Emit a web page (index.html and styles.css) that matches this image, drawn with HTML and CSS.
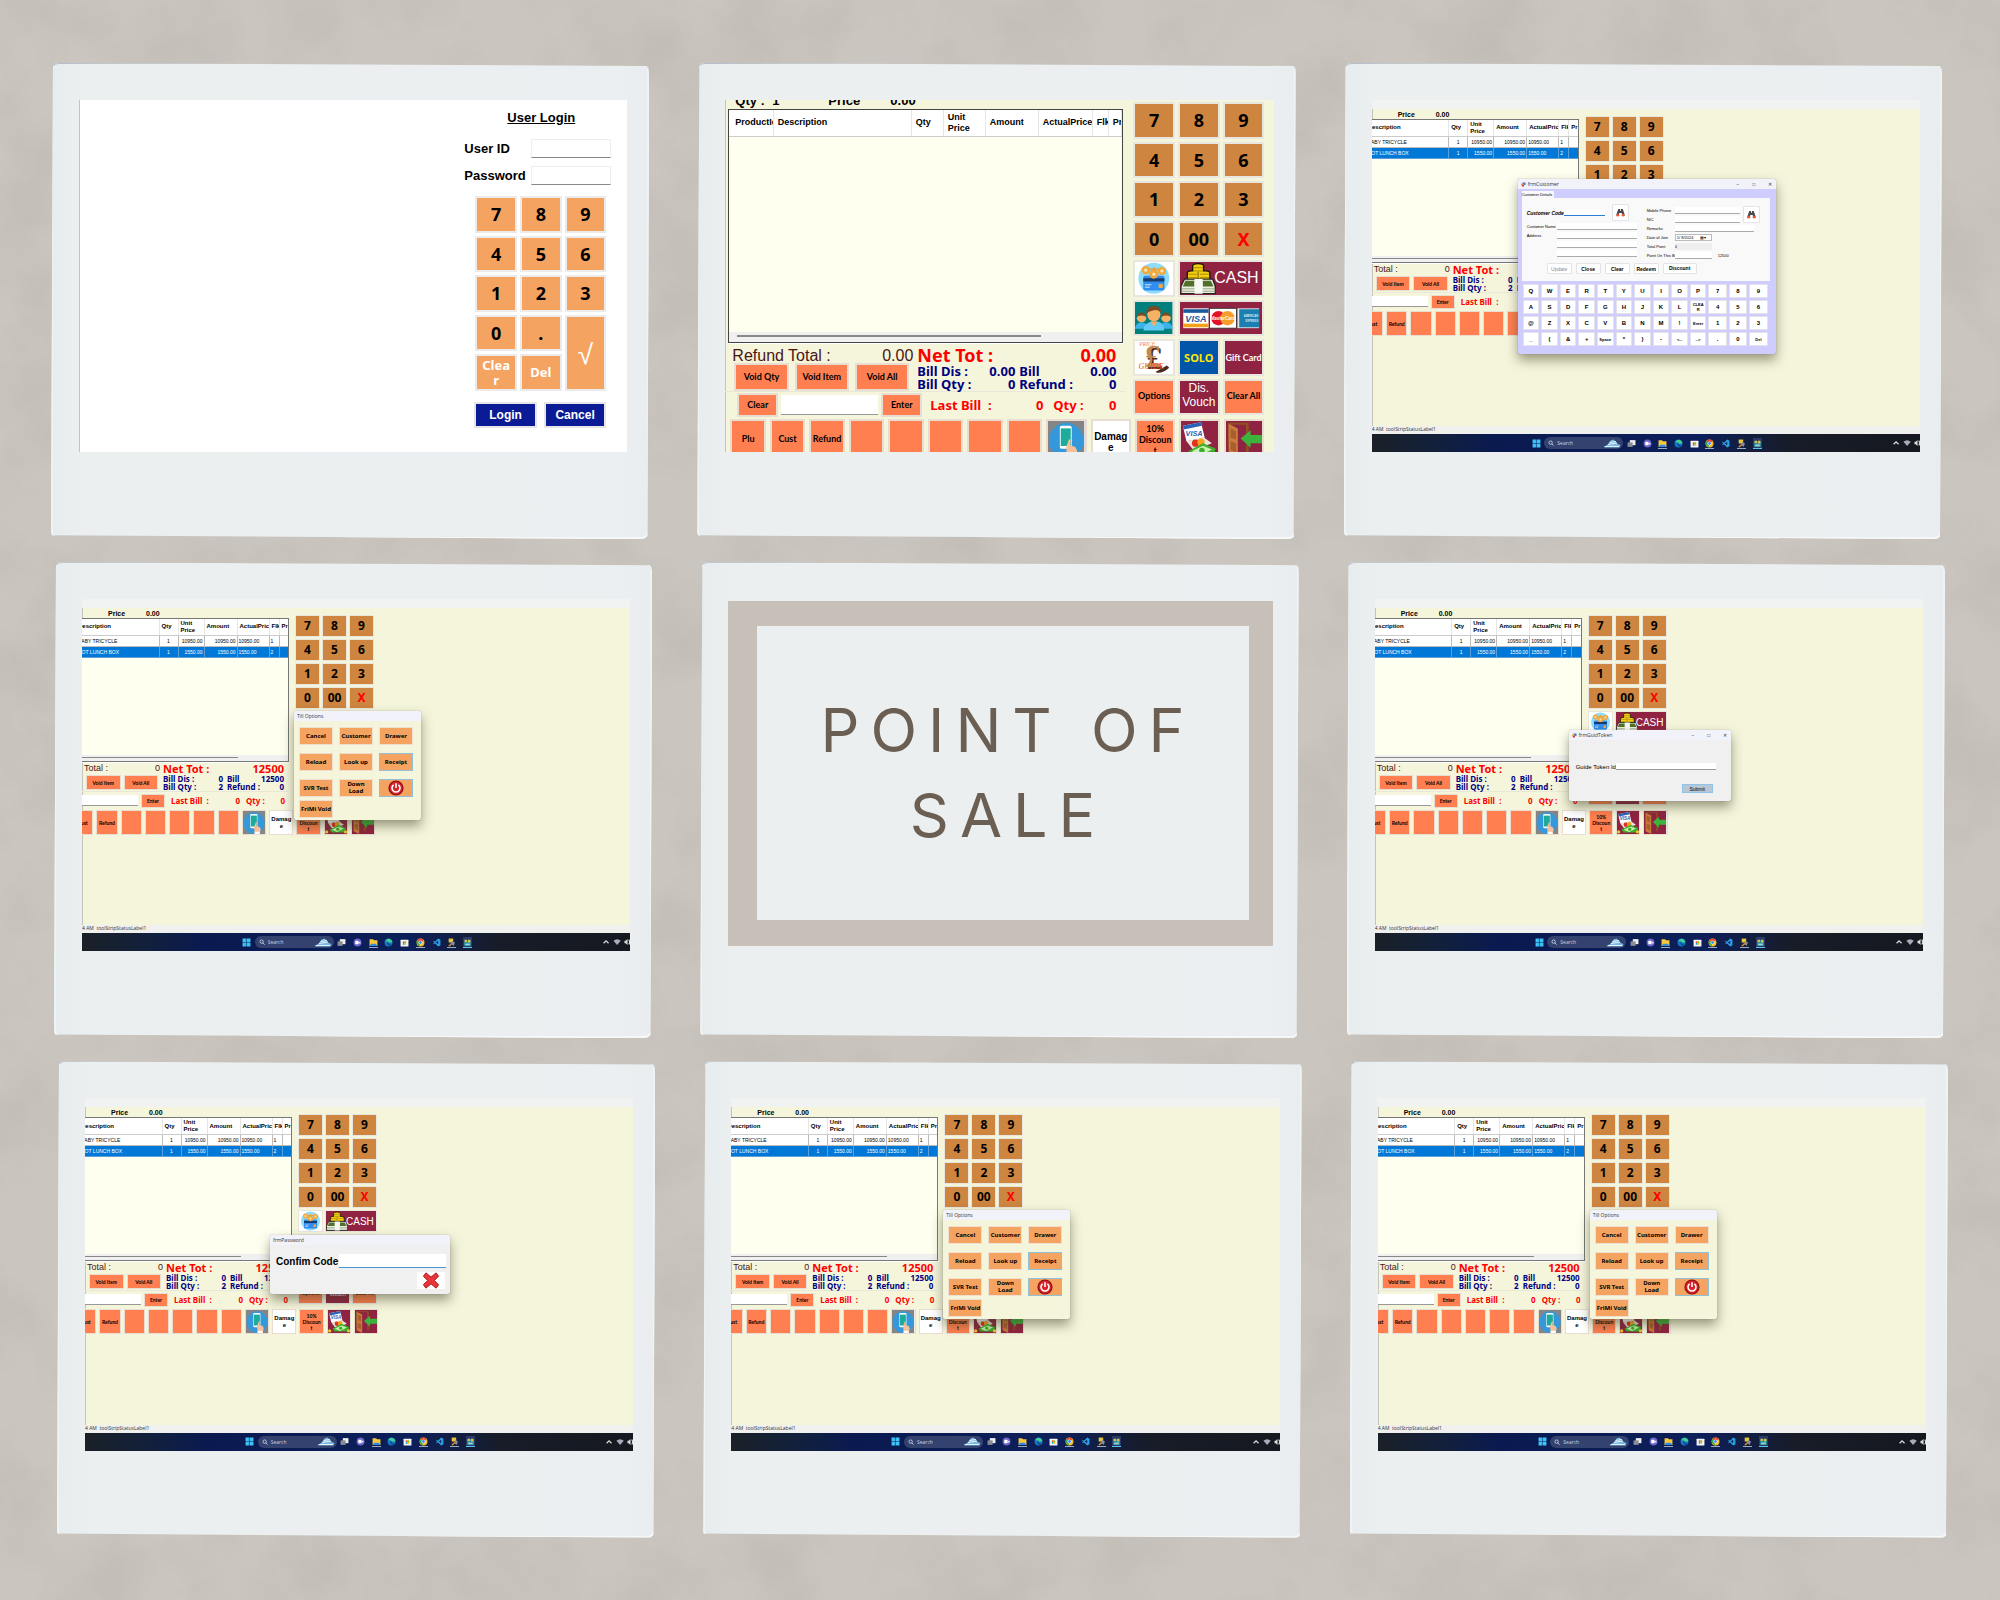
FILE: index.html
```html
<!DOCTYPE html>
<html lang="en">
<head>
<meta charset="utf-8">
<title>Point of Sale</title>
<link rel="stylesheet" href="styles.css">
</head>
<body>
<svg class="paper" aria-hidden="true">
  <filter id="mottle" x="0" y="0" width="100%" height="100%">
    <feTurbulence type="fractalNoise" baseFrequency=".011" numOctaves="6" seed="7"/>
    <feColorMatrix values="0 0 0 0 .44  0 0 0 0 .41  0 0 0 0 .37  .7 0 0 0 -.28"/>
  </filter>
  <rect width="100%" height="100%" filter="url(#mottle)"/>
</svg>

<svg class="sprite" aria-hidden="true">
  <symbol id="i-card" viewBox="0 0 40 40"><rect width="40" height="40" fill="#fff"/><circle cx="20" cy="20" r="19" fill="#8fdcf8"/><path d="M10 9h20M20 6v10" stroke="#e8a13a" stroke-width="2"/><circle cx="10" cy="10" r="5" fill="#f3a83b"/><circle cx="30" cy="11" r="5" fill="#f3a83b"/><circle cx="10" cy="10" r="2" fill="#fde7ae"/><circle cx="30" cy="11" r="2" fill="#fde7ae"/><rect x="7" y="17" width="26" height="18" rx="2" fill="#2f8cf0"/><rect x="7" y="20" width="26" height="4" fill="#173b6c"/><circle cx="20" cy="15" r="5.500" fill="#f3a83b"/><circle cx="20" cy="15" r="2" fill="#fde7ae"/><rect x="26" y="27" width="5" height="5" fill="#f3a83b"/><path d="M9 28h8M9 31h6" stroke="#fff"/></symbol>
  <symbol id="i-cash" viewBox="0 0 40 40" preserveAspectRatio="none"><g fill="#f2cf12" stroke="#1a1600" stroke-width="1.500"><path d="M8 22V14q0-3 4-3h2V5q0-3 6-3t6 3v6h3q4 0 4 3v8z"/></g><path d="M9 15h10M22 15h10M9 19h10M22 19h10M15 7h10M15 11h10" stroke="#a47f00"/><path d="M20 12v10" stroke="#6b5200"/><path d="M5 21h31l3 9v9H1v-9z" fill="#e9efdc" stroke="#222" stroke-width="1.500"/><path d="M6 23h10v7H3zM25 23h9l3 7H25z" fill="#52702b"/><path d="M2 33h37M2 36h37" stroke="#8d9a80"/><path d="M16 21h9v18h-9z" fill="#f6f8f2"/></symbol>
  <symbol id="i-people" viewBox="0 0 40 40" preserveAspectRatio="none"><rect width="40" height="40" fill="#00807d"/><circle cx="7" cy="20" r="5" fill="#f5b266"/><path d="M2 18q1-5 5-5t5 5q-5-3-10 0z" fill="#7b4a22"/><circle cx="33" cy="20" r="5" fill="#f5b266"/><path d="M28 18q1-5 5-5t5 5q-5-3-10 0z" fill="#7b4a22"/><path d="M0 33q1-8 7-8t7 8zM26 33q1-8 7-8t7 8z" fill="#3bb3ea"/><ellipse cx="20" cy="15" rx="7" ry="9" fill="#f5b266"/><path d="M12 14Q12 5 20 5t8 9q-3-5-8-4t-8 4z" fill="#7b4a22"/><path d="M9 35q0-10 11-11t11 11z" fill="#62c8f5"/><path d="M16 24l4 6 4-6z" fill="#f5b266"/></symbol>
  <symbol id="i-cards" viewBox="0 0 84 36"><rect width="84" height="36" fill="#902341"/><rect y="7" width="28" height="22" fill="#fff"/><rect y="8" width="28" height="4" fill="#1a5a9c"/><rect y="24" width="28" height="4" fill="#f4a11c"/><text x="14" y="22" text-anchor="middle" font-family="Liberation Sans" font-size="10" font-weight="bold" font-style="italic" fill="#1a5a9c">VISA</text><rect x="29" y="7" width="30" height="22" fill="#fff" stroke="#333"/><circle cx="39" cy="18" r="8" fill="#e2142b"/><circle cx="49" cy="18" r="8" fill="#f79e2a"/><text x="44" y="20" text-anchor="middle" font-family="Liberation Sans" font-size="5" font-weight="bold" font-style="italic" fill="#fff">MasterCard</text><rect x="60" y="7" width="24" height="22" fill="#dfe5ea"/><rect x="62" y="8" width="22" height="20" fill="#1d7fb0"/><text x="83" y="17" text-anchor="end" font-family="Liberation Sans" font-size="3" font-weight="bold" fill="#d7ecf6">AMERICAN</text><text x="83" y="22" text-anchor="end" font-family="Liberation Sans" font-size="3" font-weight="bold" fill="#d7ecf6">EXPRESS</text></symbol>
  <symbol id="i-pound" viewBox="0 0 40 40"><rect width="40" height="40" fill="#fff"/><path d="M22 38l14-8 3 3q-8 7-15 6z" fill="#4a2a18"/><text x="11" y="34" font-family="Liberation Serif" font-size="40" font-weight="bold" fill="#4a2a18">£</text><text x="9" y="32" font-family="Liberation Serif" font-size="40" font-weight="bold" fill="#c08a55">£</text><text x="2" y="6" font-family="Liberation Serif" font-size="7" font-style="italic" fill="#ff7f50">PRICE</text><text x="1" y="35" font-family="Liberation Serif" font-size="10" font-style="italic" fill="#f0562c">GUIDE</text></symbol>
  <symbol id="i-phone" viewBox="0 0 40 40" preserveAspectRatio="none"><rect width="40" height="40" fill="#858585"/><circle cx="20" cy="21" r="19" fill="#3498db"/><rect x="13" y="5" width="13" height="25" rx="2" fill="#fff"/><rect x="14" y="8" width="11" height="19" fill="#1dab9b"/><path d="M20 28l3-8q2-1 2 2l-1 4 6 2 2 4-2 8h-9z" fill="#f9bf96"/><path d="M21 36h9v4h-9z" fill="#fff"/></symbol>
  <symbol id="i-pay" viewBox="0 0 40 40"><path d="M2 5l20-4 4 17-20 4z" fill="#fff"/><path d="M2 5l20-4 1 4-20 4z" fill="#2b62b4"/><text x="5" y="16" font-family="Liberation Sans" font-size="8" font-weight="bold" font-style="italic" fill="#2b62b4">VISA</text><path d="M6 22l18-5 10 7-20 8z" fill="#e9e4dc"/><circle cx="16" cy="24" r="4" fill="#e5301f"/><circle cx="22" cy="23" r="4" fill="#f6a21c"/><path d="M8 33l16-9 14 6-2 8H12z" fill="#3fae2a"/><path d="M12 33l12-6 10 4-12 6z" fill="#c9f3b2"/><circle cx="23" cy="32" r="3" fill="#3fae2a"/><circle cx="3" cy="37" r="3" fill="#eec22a"/><circle cx="37" cy="37" r="3" fill="#eec22a"/></symbol>
  <symbol id="i-exit" viewBox="0 0 40 40" preserveAspectRatio="none"><rect width="40" height="40" fill="#902341"/><path d="M2 37V2h23v33h-3V4H5z" fill="#8f5022"/><path d="M3 3l10 5v32L3 35z" fill="#c97a3c"/><path d="M5 8l6 3v9l-6-2zM5 22l6 2v10l-6-3z" fill="#a85f2b"/><path d="M16 19l11-9v5h13v9H27v5z" fill="#3cb43c"/></symbol>
  <symbol id="i-power" viewBox="0 0 20 20"><circle cx="10" cy="10" r="9.500" fill="#8e0f12"/><circle cx="10" cy="10" r="8" fill="#d8222a"/><path d="M7 6a5 5 0 1 0 6 0M10 4v6" fill="none" stroke="#fff" stroke-width="2"/></symbol>
  <symbol id="i-cross" viewBox="0 0 20 20"><path d="M1 5l3-4 6 5 6-5 3 4-5 5 5 5-3 4-6-5-6 5-3-4 5-5z" fill="#e8353a" stroke="#a11" stroke-width="1"/></symbol>
  <symbol id="i-find" viewBox="0 0 20 20"><path d="M5 2h4v4h2V2h4l4 12v3h-6v-6H7v6H1v-3z" fill="#4a4a4e"/><circle cx="4" cy="16" r="3" fill="#f0562c"/><circle cx="16" cy="16" r="3" fill="#f0562c"/></symbol>
  <symbol id="i-app" viewBox="0 0 10 10"><rect x="3" y="1" width="6" height="5" fill="#4478c8"/><rect y="3" width="5" height="4" fill="#f0a13a"/><rect x="2" y="6" width="4" height="3" fill="#d13b3b"/></symbol>
  <symbol id="t-win" viewBox="0 0 16 16"><path d="M1 1h6v6H1zM8 1h7v6H8zM1 8h6v7H1zM8 8h7v7H8z" fill="#3dc3f7"/></symbol>
  <symbol id="t-lens" viewBox="0 0 16 16"><circle cx="7" cy="7" r="4.500" fill="none" stroke="#dfe6f5" stroke-width="2"/><path d="M10 10l5 5" stroke="#dfe6f5" stroke-width="2"/></symbol>
  <symbol id="t-shoe" viewBox="0 0 36 18"><path d="M1 15q8-1 14-12l6-2 4 4q3 5 10 7l-2 5H3z" fill="#79b8e0"/><path d="M10 11l18-3M13 7l13-2M4 15h28" stroke="#e5f4fc" stroke-width="2"/></symbol>
  <symbol id="t-task" viewBox="0 0 16 16"><rect x="5" y="2" width="10" height="9" fill="#eee"/><rect x="1" y="6" width="9" height="8" fill="#8a8d94"/></symbol>
  <symbol id="t-chat" viewBox="0 0 16 16"><circle cx="8" cy="8" r="7" fill="#6b63c9"/><rect x="4" y="5" width="6" height="6" rx="1" fill="#fff"/><path d="M10 8l3-2v5z" fill="#fff"/></symbol>
  <symbol id="t-folder" viewBox="0 0 16 16"><path d="M1 2h6l2 2h6v10H1z" fill="#f9c83a"/><path d="M1 14l3-4h8l3 4z" fill="#2f8be0"/></symbol>
  <symbol id="t-edge" viewBox="0 0 16 16"><circle cx="8" cy="8" r="7" fill="#1377c8"/><path d="M2 6q3-6 9-4 4 2 4 6h-7q0-3-6-2z" fill="#43d18e"/><path d="M7 8q0 5 6 5" stroke="#0b3f7d" stroke-width="2" fill="none"/></symbol>
  <symbol id="t-store" viewBox="0 0 16 16"><rect x="1" y="3" width="14" height="12" rx="1" fill="#f2f4f7"/><path d="M5 6h3v3H5z" fill="#f25022"/><path d="M8 6h3v3H8z" fill="#7fba00"/><path d="M5 9h3v3H5z" fill="#00a4ef"/><path d="M8 9h3v3H8z" fill="#ffb900"/></symbol>
  <symbol id="t-chrome" viewBox="0 0 16 16"><circle cx="8" cy="8" r="7" fill="#fbc116"/><path d="M8 8L2 4q6-6 12 0z" fill="#ea4335"/><path d="M8 8L2 4q-3 6 4 11z" fill="#34a853"/><circle cx="8" cy="8" r="3.500" fill="#fff"/><circle cx="8" cy="8" r="2.500" fill="#4285f4"/></symbol>
  <symbol id="t-code" viewBox="0 0 16 16"><path d="M11 1l4 2v10l-4 2-9-9 1-1 8 6V5l-8 6-1-1z" fill="#2aa0e8"/></symbol>
  <symbol id="t-db" viewBox="0 0 16 16"><path d="M3 1h8v7H3z" fill="#e8c63a"/><path d="M2 14l6-6 2 2-5 5z" fill="#c9863a"/><path d="M9 5l5 3-2 6-3-3z" fill="#8a9099"/></symbol>
  <symbol id="t-till" viewBox="0 0 16 16"><path d="M2 4h12v10H2z" fill="#2a8f9d"/><path d="M3 3h4v4H3zM9 3h4v5H9z" fill="#e2c04a"/><path d="M4 10h8v3H4z" fill="#9bd6de"/></symbol>
  <symbol id="t-tray" viewBox="0 0 44 16"><path d="M1 10l4-4 4 4" fill="none" stroke="#ddd" stroke-width="2"/><path d="M17 6q6-5 12 0l-6 7z" fill="#aab"/><path d="M35 6h2l3-3v10l-3-3h-2z" fill="#ddd"/><path d="M42 4q3 4 0 8" fill="none" stroke="#ddd" stroke-width="2"/></symbol>
</svg>

<template id="keypad">
  <div class="keys">
    <button class="num">7</button><button class="num">8</button><button class="num">9</button>
    <button class="num">4</button><button class="num">5</button><button class="num">6</button>
    <button class="num">1</button><button class="num">2</button><button class="num">3</button>
    <button class="num">0</button><button class="num">00</button><button class="num red">X</button>
    <button class="pic pale" aria-label="Card points"><svg><use href="#i-card"/></svg></button>
    <button class="cash"><svg aria-hidden="true"><use href="#i-cash"/></svg>CASH</button>
    <button class="pic" aria-label="Customers"><svg><use href="#i-people"/></svg></button>
    <button class="pic wide" aria-label="Credit cards"><svg><use href="#i-cards"/></svg></button>
    <button class="pic pale" aria-label="Price guide"><svg><use href="#i-pound"/></svg></button>
    <button class="solo">SOLO</button><button class="gift">Gift Card</button>
    <button class="act">Options</button><button class="vouch">Dis. Vouch</button><button class="act">Clear All</button>
  </div>
</template>

<template id="strip-end">
  <button class="pic phone" aria-label="Mobile top-up"><svg><use href="#i-phone"/></svg></button>
  <button class="damage">Damag<br>e</button>
  <button class="act ten">10%<br>Discoun<br>t</button>
  <button class="pic wine" aria-label="Payments"><svg><use href="#i-pay"/></svg></button>
  <button class="pic" aria-label="Exit"><svg><use href="#i-exit"/></svg></button>
</template>

<template id="desktop">
  <div class="window-top"></div>
  <div class="pos">
    <div class="bill">
      <div class="info"><span class="i-price">Price</span><span>0.00</span></div>
      <div class="list">
        <table>
          <colgroup><col class="c-desc"><col class="c-qty"><col class="c-unit"><col class="c-amt"><col class="c-act"><col class="c-flag"><col></colgroup>
          <thead><tr><th>Description</th><th>Qty</th><th>Unit<br>Price</th><th>Amount</th><th>ActualPrice</th><th>Flk</th><th>Pr</th></tr></thead>
          <tbody>
            <tr><td>BABY TRICYCLE</td><td class="mid">1</td><td class="end">10950.00</td><td class="end">10950.00</td><td>10950.00</td><td>1</td><td></td></tr>
            <tr class="picked"><td>HOT LUNCH BOX</td><td class="mid">1</td><td class="end">1550.00</td><td class="end">1550.00</td><td>1550.00</td><td>2</td><td></td></tr>
          </tbody>
        </table>
        <div class="scroll"><i></i></div>
      </div>
      <div class="totals">
        <div class="side">
          <p class="total"><span>Total :</span><span>0</span></p>
          <div class="voids"><button class="act">Void Item</button><button class="act">Void All</button></div>
        </div>
        <div class="sums">
          <p class="net"><span>Net Tot :</span><span>12500</span></p>
          <p class="pairs"><span class="pair"><span>Bill Dis :</span><span>0</span></span><span class="pair"><span>Bill</span><span>12500</span></span></p>
          <p class="pairs"><span class="pair"><span>Bill Qty :</span><span>2</span></span><span class="pair"><span>Refund :</span><span>0</span></span></p>
        </div>
      </div>
      <div class="entry"><input type="text" aria-label="Item code"><button class="act">Enter</button><p class="pairs last"><span class="pair"><span>Last Bill&nbsp; :</span><span>0</span></span><span class="pair"><span>Qty :</span><span>0</span></span></p></div>
    </div>
    <div class="pad"></div>
  </div>
  <div class="strip"><button class="act">Cust</button><button class="act">Refund</button><button class="act" aria-label="Spare 1"></button><button class="act" aria-label="Spare 2"></button><button class="act" aria-label="Spare 3"></button><button class="act" aria-label="Spare 4"></button><button class="act" aria-label="Spare 5"></button></div>
  <div class="status">4 AM&nbsp; toolStripStatusLabel1</div>
  <div class="taskbar">
    <div class="apps">
      <svg><use href="#t-win"/></svg>
      <span class="search"><svg><use href="#t-lens"/></svg>Search<svg class="shoe"><use href="#t-shoe"/></svg></span>
      <svg><use href="#t-task"/></svg><svg><use href="#t-chat"/></svg><svg class="open"><use href="#t-folder"/></svg><svg><use href="#t-edge"/></svg><svg><use href="#t-store"/></svg><svg class="open"><use href="#t-chrome"/></svg><svg><use href="#t-code"/></svg><svg class="open"><use href="#t-db"/></svg><svg class="open now"><use href="#t-till"/></svg>
    </div>
    <svg class="tray"><use href="#t-tray"/></svg>
  </div>
</template>

<template id="dlg-till">
  <section class="dialog till">
    <header>Till Options</header>
    <div class="options">
      <button>Cancel</button><button>Customer</button><button>Drawer</button>
      <button>Reload</button><button>Look up</button><button class="focus">Receipt</button>
      <button>SVR Test</button><button>Down<br>Load</button><button class="focus" aria-label="Power off"><svg><use href="#i-power"/></svg></button>
    </div>
    <div class="options more"><button>FriMi Void</button></div>
  </section>
</template>

<template id="dlg-token">
  <section class="dialog token">
    <header><svg><use href="#i-app"/></svg>frmGuidToken<span class="ctl"><i>–</i><i>□</i><i>✕</i></span></header>
    <label>Guide Token Id <input type="text"></label>
    <button>Submit</button>
  </section>
</template>

<template id="dlg-password">
  <section class="dialog password">
    <header>frmPassword</header>
    <label>Confim Code <input type="text"></label>
    <button aria-label="Close"><svg><use href="#i-cross"/></svg></button>
  </section>
</template>

<template id="dlg-customer">
  <section class="dialog customer">
    <header><svg><use href="#i-app"/></svg>frmCustomer<span class="ctl"><i>–</i><i>□</i><i>✕</i></span></header>
    <div class="tab">Customer Details</div>
    <div class="sheet">
      <div class="fields">
        <div class="col-a">
          <div class="code-row"><label>Customer Code <input type="text"></label><button aria-label="Find by code"><svg><use href="#i-find"/></svg></button></div>
          <label class="row">Customer Name<input type="text"></label>
          <label class="row">Address<input type="text"></label>
          <input type="text" aria-label="Address line 2"><input type="text" aria-label="Address line 3">
        </div>
        <div class="col-b">
          <label class="row">Mobile Phone<input type="text"></label>
          <label class="row">NIC<input type="text"></label>
          <label class="row">Remarks<input type="text" class="long"></label>
          <label class="row">Date of Join<input type="text" class="short date" value=" 1/ 8/2024      ▦▾"></label>
          <label class="row">Total Point<input type="text" class="short grey" value="0"></label>
          <label class="row">Point On This Bill<input type="text" class="short"><span>12500</span></label>
        </div>
        <button class="find" aria-label="Find by phone"><svg><use href="#i-find"/></svg></button>
      </div>
      <div class="acts"><button class="dim">Update</button><button>Close</button><button>Clear</button><button>Redeem</button><button class="up">Discount</button></div>
    </div>
    <div class="board"></div>
  </section>
</template>

<main class="wall">
  <div class="row-of-photos">
    <article class="photo">
      <div class="screen login">
        <form class="login-form">
          <h2>User Login</h2>
          <label>User ID<input type="text"></label>
          <label>Password<input type="password"></label>
          <div class="login-keys">
            <button type="button">7</button><button type="button">8</button><button type="button">9</button>
            <button type="button">4</button><button type="button">5</button><button type="button">6</button>
            <button type="button">1</button><button type="button">2</button><button type="button">3</button>
            <button type="button">0</button><button type="button">.</button><button type="button" class="ok">√</button>
            <button type="button" class="word">Clea<br>r</button><button type="button" class="word">Del</button>
          </div>
          <div class="login-acts"><button type="button">Login</button><button type="button">Cancel</button></div>
        </form>
      </div>
    </article>
    <article class="photo">
      <div class="screen big">
        <div class="pos">
          <div class="bill">
            <div class="info"><span class="i-qty">Qty :</span><span class="i-one">1</span><span class="i-price">Price</span><span>0.00</span></div>
            <div class="list">
              <table>
                <colgroup><col class="c-prod"><col class="c-desc"><col class="c-qty"><col class="c-unit"><col class="c-amt"><col class="c-act"><col class="c-flag"><col></colgroup>
                <thead><tr><th>ProductId</th><th>Description</th><th>Qty</th><th>Unit<br>Price</th><th>Amount</th><th>ActualPrice</th><th>Flk</th><th>Pr</th></tr></thead>
              </table>
              <div class="scroll"><i></i></div>
            </div>
            <div class="totals">
              <div class="side">
                <p class="total"><span>Refund Total :</span><span>0.00</span></p>
                <div class="voids"><button class="act">Void Qty</button><button class="act">Void Item</button><button class="act">Void All</button></div>
              </div>
              <div class="sums">
                <p class="net"><span>Net Tot :</span><span>0.00</span></p>
                <p class="pairs"><span class="pair"><span>Bill Dis :</span><span>0.00</span></span><span class="pair"><span>Bill</span><span>0.00</span></span></p>
                <p class="pairs"><span class="pair"><span>Bill Qty :</span><span>0</span></span><span class="pair"><span>Refund :</span><span>0</span></span></p>
              </div>
            </div>
            <div class="entry"><button class="act">Clear</button><input type="text" aria-label="Item code"><button class="act">Enter</button><p class="pairs last"><span class="pair"><span>Last Bill&nbsp; :</span><span>0</span></span><span class="pair"><span>Qty :</span><span>0</span></span></p></div>
          </div>
          <div class="pad"></div>
        </div>
        <div class="strip"><button class="act">Plu</button><button class="act">Cust</button><button class="act">Refund</button><button class="act" aria-label="Spare 1"></button><button class="act" aria-label="Spare 2"></button><button class="act" aria-label="Spare 3"></button><button class="act" aria-label="Spare 4"></button><button class="act" aria-label="Spare 5"></button></div>
      </div>
    </article>
    <article class="photo"><div class="screen small" data-dialog="dlg-customer"></div></article>
  </div>
  <div class="row-of-photos second">
    <article class="photo"><div class="screen small" data-dialog="dlg-till"></div></article>
    <article class="photo"><div class="screen cover"><h1>POINT OF SALE</h1></div></article>
    <article class="photo"><div class="screen small" data-dialog="dlg-token"></div></article>
  </div>
  <div class="row-of-photos third">
    <article class="photo"><div class="screen small" data-dialog="dlg-password"></div></article>
    <article class="photo"><div class="screen small" data-dialog="dlg-till"></div></article>
    <article class="photo"><div class="screen small" data-dialog="dlg-till"></div></article>
  </div>
</main>
<script src="app.js"></script>
</body>
</html>
```

FILE: app.js
```js
const stamp = (id, host) => host.append(document.getElementById(id).content.cloneNode(true));

document.querySelectorAll('.screen.small').forEach(s => {
  stamp('desktop', s);
  stamp(s.dataset.dialog, s);
});
document.querySelectorAll('.pad').forEach(p => stamp('keypad', p));
document.querySelectorAll('.strip').forEach(p => stamp('strip-end', p));

const rows = [
  'Q W E R T Y U I O P 7 8 9',
  'A S D F G H J K L CLEAR 4 5 6',
  '@ Z X C V B N M ! Enter 1 2 3',
  '_ ( & + Space * ) - <-- --> . 0 Del'
];
document.querySelectorAll('.board').forEach(board => {
  rows.join(' ').split(' ').forEach(k => {
    const b = document.createElement('button');
    b.textContent = k === 'CLEAR' ? 'CLEA R' : k;
    if (k.length > 1) b.className = 'tiny';
    board.append(b);
  });
});
```

FILE: styles.css
```css
* { box-sizing: border-box; margin: 0; padding: 0; }
body { background: #cac5be; font-family: "Liberation Sans", Arial, sans-serif; color: #000; position: relative; min-height: 100vh; overflow-x: hidden; }
button, input { font: inherit; color: inherit; border: 0; min-width: 0; }
button { display: flex; align-items: center; justify-content: center; overflow: hidden; text-align: center; }
button svg { width: 100%; height: 100%; display: block; }
.sprite { display: none; }
.paper { position: absolute; inset: 0; width: 100%; height: 100%; z-index: -1; }

.wall { display: flex; flex-direction: column; gap: 23px; padding: 63px 0 62px; }
.row-of-photos { display: grid; grid-template-columns: repeat(3, 1fr); gap: 48px; padding: 0 58px 0 51px; }
.row-of-photos.second { padding: 0 55px 0 54px; }
.row-of-photos.third { padding: 0 52px 0 57px; }
.photo { background: linear-gradient(90deg, #e7ecee, #ebeff0 5%, #ebeff1 95%, #e9edef); border-radius: 8px; padding: 37px 22px 87px 28px; box-shadow: inset 0 1px #b4bcc8, inset 0 -2px #f6f8f8, inset 2px 0 #f0f3f3, inset -2px 0 #f0f3f3; clip-path: polygon(2px 0, 100% 3px, calc(100% - 2px) 100%, 0 calc(100% - 4px)); }
.screen { position: relative; aspect-ratio: 548 / 352; overflow: hidden; display: flex; flex-direction: column; background: #f5f5dc; box-shadow: inset 1px 0 #c5c4b8; }

/* Cover card */
.cover { aspect-ratio: 545 / 345; margin: 2px 4px 5px 0; background: #c6c0b9; padding: 25px 24px 26px 29px; box-shadow: none; }
.cover h1 { flex: 1; display: flex; align-items: center; justify-content: center; text-align: center; background: #ebeff0; color: #6b5f53; font: 400 61px/85px Inter, sans-serif; letter-spacing: 11px; padding: 0 40px 0 50px; }

/* Login */
.login { background: #fff; align-items: flex-end; }
.login-form { width: 163px; padding: 10px 16px 0 0; display: flex; flex-direction: column; }
.login-form h2 { font-size: 13px; line-height: 16px; text-decoration: underline; margin: 0 0 13px 43px; }
.login-form label { display: flex; align-items: center; justify-content: space-between; font-weight: bold; font-size: 13px; height: 19px; margin-bottom: 8px; }
.login-form input { width: 80px; height: 19px; border: 1px solid #eee; border-bottom-color: #888; }
.login-keys { display: grid; grid-template: repeat(5, 1fr) / repeat(3, 1fr); gap: 3px; height: 195px; margin: 3px 5px 0 11px; }
.login-keys button { background: #f4a460; border: 2px solid #ecebe9; font: 700 18px/18px "Noto Sans", sans-serif; }
.login-keys .ok { grid-area: 4 / 3 / 6 / 4; color: #fff; font-size: 28px; font-weight: 400; }
.login-keys .word { color: #fff; font-size: 13px; line-height: 15px; }
.login-acts { display: grid; grid-template-columns: 1fr 1fr; gap: 7px; margin: 11px 5px 0 10px; }
.login-acts button { height: 26px; background: #0a1b95; color: #fff; border: 2px solid #e6e6e8; font-weight: bold; font-size: 12px; }

/* Till screen, sized by the variables of .small and .big */
.small { --bill: 207px; --gap: 6px; --pad: 79px; --info: 10px; --info-f: 7px; --list: 144px; --th: 16px; --thf: 6px; --side: 79px; --net: 13px; --netf: 11px; --line: 8px; --lf: 8px; --tf: 9px; --bf: 5px; --entry: 17px; --num: 12px; --cash: 10px; --v: 6px; }
.big { --bill: 401px; --gap: 7px; --pad: 131px; --info: 9px; --info-f: 13px; --list: 234px; --th: 26px; --thf: 9px; --side: 189px; --net: 21px; --netf: 18px; --line: 13px; --lf: 13px; --tf: 16px; --bf: 9px; --entry: 26px; --num: 18px; --cash: 16px; --v: 12px; }
.window-top { height: 9px; background: #f1f2f2; }
.pos { display: grid; grid-template-columns: var(--bill) var(--pad); gap: var(--gap); }
.info { display: flex; align-items: flex-end; height: var(--info); font-size: var(--info-f); line-height: 8px; font-weight: bold; padding-left: 26px; }
.info .i-price { width: 38px; }
.big .info { line-height: 16px; padding-left: 10px; }
.big .i-qty { width: 37px; } .big .i-one { width: 56px; } .big .info .i-price { width: 62px; }
.list { display: flex; flex-direction: column; justify-content: space-between; height: var(--list); background: #fffff0; border: 1px solid #777; border-left: 0; overflow: hidden; box-shadow: 0 1px #fff; }
.big .list { margin: 0 3px; border: 1px solid #444; }
table { table-layout: fixed; width: 211px; margin-left: -4px; border-collapse: collapse; font-size: 5px; }
.big table { width: 100%; margin: 0; }
th { height: var(--th); background: #fff; font-size: var(--thf); line-height: 7px; text-align: left; border-right: 1px solid #e6e6e6; border-bottom: 1px solid #ccc; padding-left: 2px; overflow: hidden; white-space: nowrap; }
.big th { line-height: 11px; padding-left: 4px; }
td { height: 11px; background: #fff; border-right: 1px solid #bbb; border-bottom: 1px solid #bbb; white-space: nowrap; overflow: hidden; padding: 0 1px; }
th:first-child, td:first-child { padding-left: 0; }
.big th:first-child { padding-left: 6px; }
td.mid { text-align: center; } td.end { text-align: right; }
.picked td { background: #0078d7; color: #fff; border-color: #5d9fd8; }
.c-desc { width: 81px; } .c-qty { width: 19px; } .c-unit { width: 26px; } .c-amt { width: 33px; } .c-act { width: 32px; } .c-flag { width: 10px; }
.big .c-prod { width: 44px; } .big .c-desc { width: 138px; } .big .c-qty { width: 32px; } .big .c-unit { width: 42px; } .big .c-amt { width: 53px; } .big .c-act { width: 54px; } .big .c-flag { width: 16px; }
.scroll { height: 6px; background: #f0f0f0; padding-top: 2px; }
.scroll i { display: block; width: 156px; height: 1px; background: #888; }
.big .scroll { height: 10px; padding: 3px 0 0 8px; }
.big .scroll i { width: 304px; height: 2px; }
.totals { display: grid; grid-template-columns: var(--side) 1fr; border-bottom: 1px solid #e8e8d8; }
.total { display: flex; justify-content: space-between; font-size: var(--tf); height: var(--net); line-height: var(--net); padding: 0 1px 0 2px; color: #4a1515; }
.big .total { height: 20px; line-height: 26px; padding-left: 7px; }
.voids { display: flex; gap: 3px; height: 15px; padding: 0 3px 0 4px; }
.big .voids { gap: 6px; height: 28px; padding: 0 5px 0 9px; }
.voids button { flex: 1; }
.act { background: #ff7f50; border: 1px solid #e9ddd2; font: 700 var(--bf)/1.2 Lato, sans-serif; white-space: nowrap; }
.big .act { border-width: 2px; }
.sums { font-family: "Noto Sans", sans-serif; font-weight: bold; color: #00007f; padding: 0 5px 0 2px; }
.big .sums { padding: 1px 10px 0 3px; }
.net { display: flex; justify-content: space-between; color: #f00; font-size: var(--netf); height: var(--net); line-height: var(--net); }
.big .net { line-height: 23px; }
.pairs { display: flex; gap: 4px; font-size: var(--lf); height: var(--line); line-height: var(--line); }
.pair { display: flex; justify-content: space-between; flex: 1; white-space: nowrap; }
.pairs .pair:first-child { flex: none; width: 60px; }
.big .pairs .pair:first-child { width: 98px; }
.entry { display: flex; align-items: center; height: var(--entry); }
.entry input { width: 56px; height: 11px; margin-right: 3px; background: #fff; border-bottom: 1px solid #999; }
.entry button { width: 24px; height: 14px; }
.big .entry { padding: 0 10px 0 12px; }
.big .entry input { width: 97px; height: 20px; margin: 0 3px; }
.big .entry button { width: 41px; height: 24px; }
.entry .last { flex: 1; color: #f00; font-family: "Noto Sans", sans-serif; font-weight: bold; padding: 0 4px 0 6px; gap: 6px; }
.entry .last .pair:first-child { width: 69px; }
.big .entry .last { padding: 0 0 0 8px; gap: 10px; }
.big .entry .last .pair:first-child { width: 113px; }
.keys { display: grid; grid-template: repeat(8, 1fr) / repeat(3, 1fr); gap: 2px; height: 190px; margin-top: 7px; }
.big .keys { gap: 3px; height: 313px; margin-top: 2px; }
.keys button { border: 1px solid #e8e6de; }
.big .keys button { border-width: 2px; }
.keys .num { background: #cd853f; font: 700 var(--num)/1 "Noto Sans", sans-serif; }
.keys .red { color: #f00; }
.keys .pale { background: #fff; }
.keys .cash { grid-column: span 2; background: #902341; color: #fff; font-size: var(--cash); justify-content: flex-start; }
.keys .cash svg { width: 44%; flex: none; margin-right: -2px; }
.keys .wide { grid-column: span 2; background: #902341; }
.keys .solo { background: #0055a9; color: #ffe600; font: 700 calc(var(--bf) + 2px)/1 "Noto Sans", sans-serif; }
.keys .gift { background: #902341; color: #fff; font: 700 var(--bf)/1 Lato, sans-serif; white-space: nowrap; }
.keys .vouch { background: #902341; color: #fff; font-size: var(--v); line-height: 1.2; align-items: flex-start; }
.strip { display: flex; gap: 3px; width: 303px; height: 25px; margin: 1px 0 0 -10px; }
.strip button { flex: 0 1 22px; border: 1px solid #e9ddd2; }
.strip .wine { background: #902341; }
.strip .phone, .strip .phone ~ * { flex-basis: 25px; }
.strip .damage { background: #fff; font-size: 6px; font-weight: bold; line-height: 7px; }
.strip .ten { line-height: 6px; white-space: normal; }
.big .strip { gap: 4px; width: 534px; height: 41px; margin: 1px 0 0 5px; }
.big .strip button { flex: 0 1 36px; border-width: 2px; }
.big .strip .phone, .big .strip .phone ~ * { flex-basis: 41px; }
.big .strip .damage { font: 700 10px/11px "Liberation Sans", sans-serif; padding-top: 4px; }
.big .strip .ten { line-height: 11px; }
.status { margin-top: auto; height: 8px; background: #f0f0ee; font: 5px/7px "Open Sans", sans-serif; color: #333; }
.taskbar { height: 18px; display: flex; align-items: center; background: linear-gradient(90deg, #1a2027, #12203c 12%, #0a1a50 22%, #0d1f5a 60%, #171c28 76%, #15181f); padding: 0 0 0 160px; }
.apps { display: flex; align-items: center; justify-content: space-between; width: 230px; }
.taskbar svg { width: 9px; height: 9px; }
.taskbar .open { border-bottom: 1px solid #9ab; height: 11px; padding-top: 1px; }
.taskbar .now { border-color: #5bc0f0; background: #2a3a68; }
.search { display: flex; align-items: center; gap: 3px; width: 79px; height: 12px; margin: 0 -3px 0 -3px; padding: 0 2px 0 4px; border-radius: 6px; background: #34426f; color: #ccd3e4; font: 5px/6px "Open Sans", sans-serif; }
.search svg { width: 6px; height: 6px; }
.taskbar .shoe { width: 18px; height: 9px; margin-left: auto; }
.taskbar .tray { width: 27px; height: 10px; margin-left: auto; }

/* Windows lying over the desktop */
.dialog { position: absolute; background: #f0f0f0; border-radius: 2px; box-shadow: 0 0 1px #777, 0 6px 12px rgba(60, 60, 30, .5); overflow: hidden; font-size: 5px; }
.dialog header { display: flex; align-items: center; height: 10px; padding: 0 3px; background: #f2f2fa; font: 5px/10px "Open Sans", sans-serif; color: #333; }
.dialog header svg { width: 5px; height: 5px; margin-right: 2px; }
.ctl { margin-left: auto; display: flex; gap: 10px; }
.ctl i { font-style: normal; width: 6px; text-align: center; }
.till { left: 212px; top: 112px; width: 127px; height: 109px; background: #f5f5dc; }
.options { display: grid; grid-template-columns: repeat(3, 34px); grid-auto-rows: 18px; gap: 8px 6px; padding: 6px 6px 0 5px; }
.options.more { padding-top: 3px; }
.options button { background: #f4a460; border: 1px solid #eedfd0; font: 700 6px/7px "Noto Sans", sans-serif; white-space: nowrap; }
.options .focus { border-color: #8fc0dc; }
.token { left: 194px; top: 131px; width: 162px; height: 71px; display: flex; flex-direction: column; }
.token label { display: flex; justify-content: space-between; align-items: center; margin: 23px 15px 0 7px; font-size: 6px; white-space: nowrap; }
.token input { width: 100px; height: 7px; background: #fff; border-bottom: 1px solid #999; }
.token button { align-self: flex-end; width: 31px; height: 9px; margin: 14px 18px 0 0; background: #b9c6d4; border: 1px solid #8fc4e8; font-size: 5px; }
.password { left: 185px; top: 137px; width: 180px; height: 59px; display: flex; flex-direction: column; }
.password label { display: flex; justify-content: space-between; align-items: center; margin: 9px 4px 0 6px; font-size: 10px; font-weight: bold; white-space: nowrap; }
.password input { width: 107px; height: 14px; background: #fff; border-bottom: 1px solid #4b95d0; }
.password button { align-self: flex-end; width: 28px; height: 17px; margin: 4px 5px 0 0; background: #fff; }
.customer { left: 146px; top: 79px; width: 258px; height: 175px; background: #cfcdfd; }
.tab { display: inline-flex; align-items: center; width: 32px; height: 7px; margin: 2px 0 0 4px; background: #f9f9f9; font-size: 4px; white-space: nowrap; vertical-align: top; }
.sheet { margin: 0 6px 0 4px; height: 83px; background: #f9f9f9; padding: 6px 5px 0; }
.customer input { height: 7px; background: #fff; border-bottom: 1px solid #aaa; font-size: 4px; }
.customer button { background: #fff; border: 1px solid #e3e3e8; border-radius: 1px; font-weight: bold; }
.fields { display: flex; font-size: 4px; height: 59px; }
.col-a { width: 110px; margin-right: 10px; display: flex; flex-direction: column; align-items: flex-end; gap: 2px; }
.code-row { display: flex; gap: 7px; width: 110px; align-items: center; }
.code-row label { display: flex; align-items: center; justify-content: space-between; width: 78px; font-size: 5px; font-weight: bold; font-style: italic; white-space: nowrap; }
.code-row button, .find { width: 17px; height: 17px; padding: 3px; flex: none; }
.row { display: flex; align-items: center; white-space: nowrap; }
.col-a .row { width: 110px; justify-content: space-between; }
.col-a input { width: 80px; }
.code-row label input { width: 41px; border-color: #2a7fd0; }
.col-b { width: 96px; display: grid; grid-template-columns: 28px 68px; gap: 2px 0; padding-top: 3px; align-content: start; }
.col-b .row { display: grid; grid-template-columns: 28px 65px; grid-column: span 2; height: 7px; }
.col-b .long { width: 79px; }
.col-b .short { width: 37px; grid-column: 2; }
.col-b .row span { grid-column: 2; grid-row: 1; padding-left: 43px; }
.col-b .row .short { grid-row: 1; }
.col-b .row .date { border: 1px solid #bbb; line-height: 5px; }
.col-b .grey { background: #eee; border-color: #eee; }
.find { margin-top: 2px; }
.acts { display: flex; gap: 4px; padding-left: 20px; font-size: 5px; }
.acts button { width: 25px; height: 11px; }
.acts .dim { color: #888; font-weight: normal; }
.acts .up { width: 34px; padding-bottom: 2px; }
.board { display: grid; grid-template-columns: repeat(10, 9fr) repeat(3, 10fr); grid-auto-rows: 14px; gap: 2px; padding: 3px 8px 0 5px; }
.board button { font-size: 6px; line-height: 5px; }
.board .tiny { font-size: 4px; line-height: 5px; }
```
